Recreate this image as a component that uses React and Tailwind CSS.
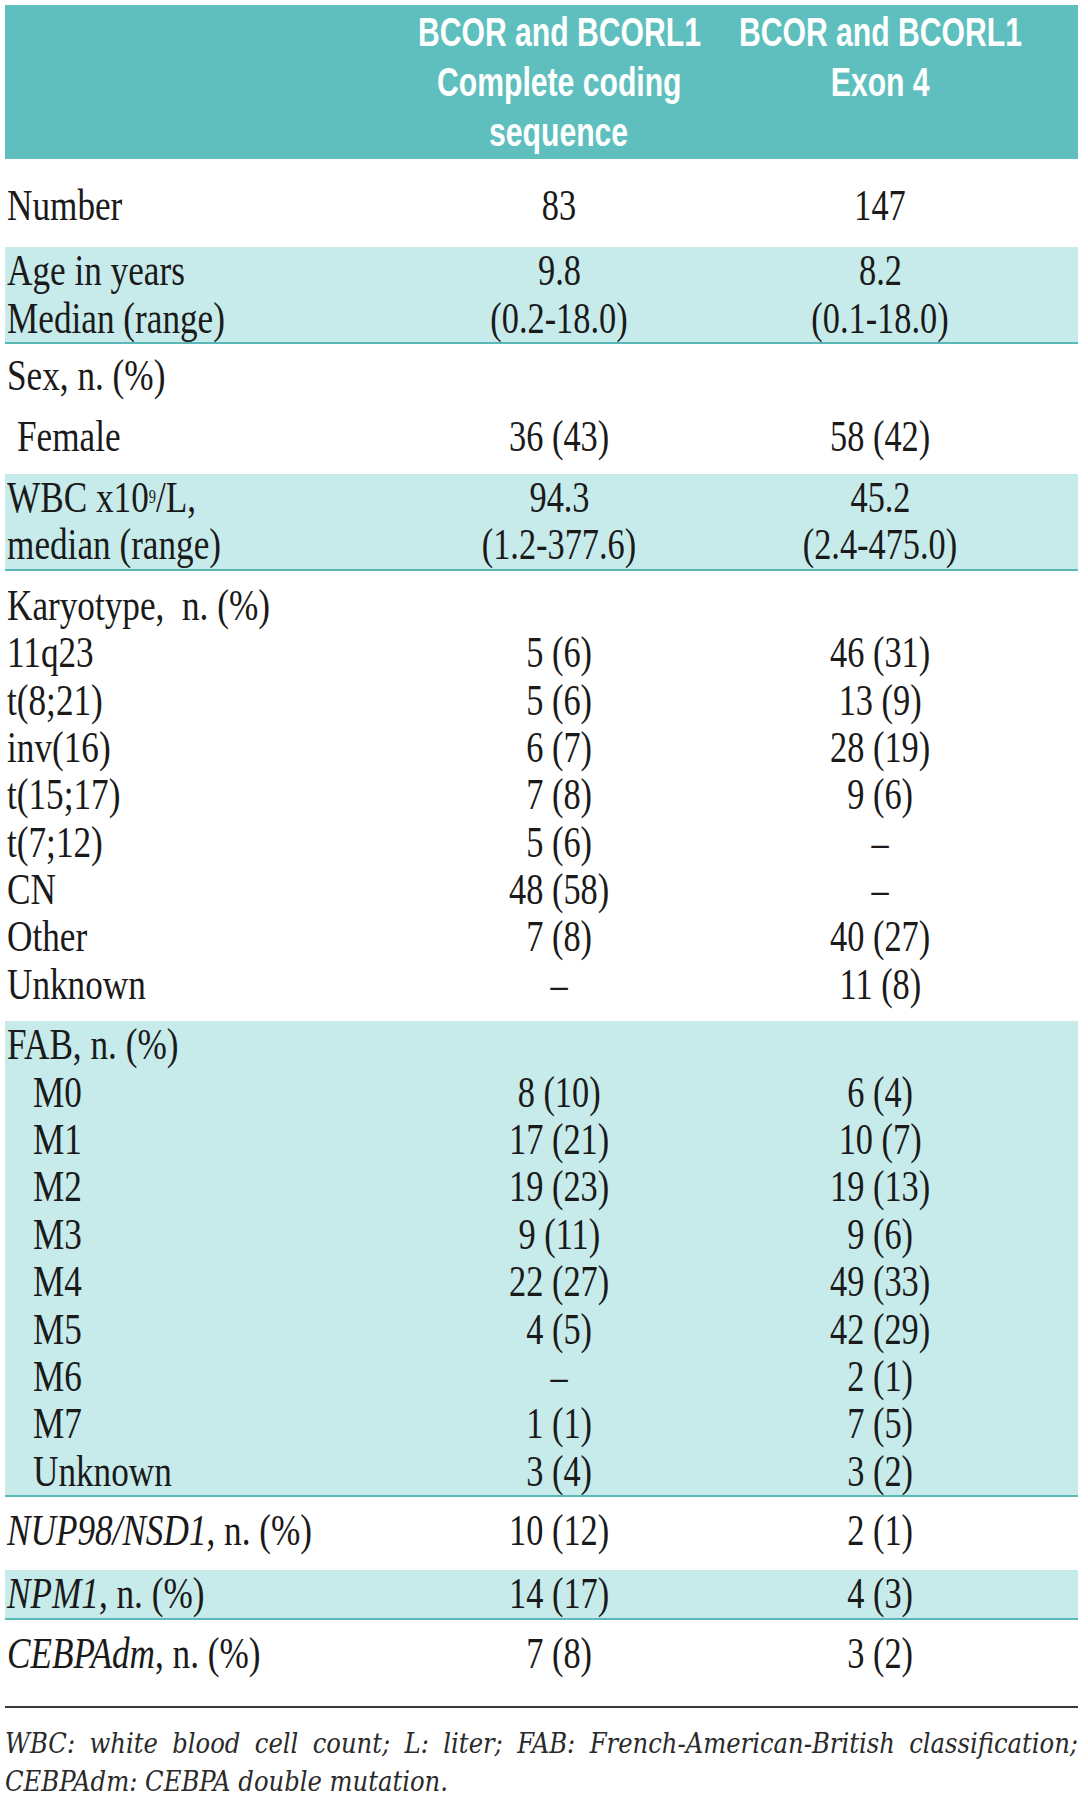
import React from 'react';

// condensed serif look: Liberation Serif squeezed horizontally
const Txt = ({ children, center }) => (
  <span
    className={`inline-block whitespace-nowrap ${center ? 'scale-x-[0.78] origin-center' : 'scale-x-[0.8] origin-left'}`}
  >
    {children}
  </span>
);

const Line = ({ label, a, b, indent = 0 }) => (
  <div className="grid grid-cols-[414px_280px_362px] h-[47.4px] leading-[47.4px]">
    <div className={indent === 1 ? 'pl-[12px]' : indent === 2 ? 'pl-[28px]' : 'pl-[2px]'}>
      <Txt>{label}</Txt>
    </div>
    <div className="flex flex-col items-center">
      <Txt center>{a}</Txt>
    </div>
    <div className="flex flex-col items-center">
      <Txt center>{b}</Txt>
    </div>
  </div>
);

const Block = ({ shaded, className = '', children }) => (
  <div className={`${shaded ? 'bg-[#c7ebea] border-b-2 border-[#5cb8b7]' : ''} ${className}`}>{children}</div>
);

const HeadLine = ({ children }) => (
  <span className="inline-block whitespace-nowrap scale-x-[0.735] origin-center">{children}</span>
);

const karyotype = [
  ['11q23', '5 (6)', '46 (31)'],
  ['t(8;21)', '5 (6)', '13 (9)'],
  ['inv(16)', '6 (7)', '28 (19)'],
  ['t(15;17)', '7 (8)', '9 (6)'],
  ['t(7;12)', '5 (6)', '–'],
  ['CN', '48 (58)', '–'],
  ['Other', '7 (8)', '40 (27)'],
  ['Unknown', '–', '11 (8)'],
];

const fab = [
  ['M0', '8 (10)', '6 (4)'],
  ['M1', '17 (21)', '10 (7)'],
  ['M2', '19 (23)', '19 (13)'],
  ['M3', '9 (11)', '9 (6)'],
  ['M4', '22 (27)', '49 (33)'],
  ['M5', '4 (5)', '42 (29)'],
  ['M6', '–', '2 (1)'],
  ['M7', '1 (1)', '7 (5)'],
  ['Unknown', '3 (4)', '3 (2)'],
];

export default function App() {
  return (
    <div className="w-[1088px] min-h-[1800px] bg-white pl-[5px] pt-[5px]">
      <div className="w-[1073px] text-[44px] text-[#1a1a1a] font-['Liberation_Serif','Times_New_Roman',serif]">
        {/* header band */}
        <div className="grid grid-cols-[414px_280px_362px] bg-[#5ebfbe] py-[2px] leading-[50px] text-[41px] font-bold text-white font-['Liberation_Sans',Arial,sans-serif]">
          <div />
          <div className="flex flex-col items-center">
            <HeadLine>BCOR and BCORL1</HeadLine>
            <HeadLine>Complete coding</HeadLine>
            <HeadLine>sequence</HeadLine>
          </div>
          <div className="flex flex-col items-center">
            <HeadLine>BCOR and BCORL1</HeadLine>
            <HeadLine>Exon 4</HeadLine>
          </div>
        </div>

        <Block className="pt-[23px] pb-[18px]">
          <Line label="Number" a="83" b="147" />
        </Block>

        <Block shaded>
          <Line label="Age in years" a="9.8" b="8.2" />
          <Line label="Median (range)" a="(0.2-18.0)" b="(0.1-18.0)" />
        </Block>

        <Block className="pt-[8px] pb-[14px]">
          <Line label="Sex, n. (%)" a="" b="" />
          <div className="h-[13px]" />
          <Line label="Female" a="36 (43)" b="58 (42)" indent={1} />
        </Block>

        <Block shaded>
          <Line label={<>WBC x10<sup className="text-[18px]">9</sup>/L,</>} a="94.3" b="45.2" />
          <Line label="median (range)" a="(1.2-377.6)" b="(2.4-475.0)" />
        </Block>

        <Block className="pt-[11px] pb-[13px]">
          <Line label={<>Karyotype,&nbsp; n. (%)</>} a="" b="" />
          {karyotype.map(([l, a, b]) => (
            <Line key={l} label={l} a={a} b={b} />
          ))}
        </Block>

        <Block shaded>
          <Line label="FAB, n. (%)" a="" b="" />
          {fab.map(([l, a, b]) => (
            <Line key={l} label={l} a={a} b={b} indent={2} />
          ))}
        </Block>

        <Block className="pt-[10px] pb-[15px]">
          <Line label={<><i>NUP98/NSD1</i>, n. (%)</>} a="10 (12)" b="2 (1)" />
        </Block>

        <Block shaded className="pb-[1px]">
          <Line label={<><i>NPM1</i>, n. (%)</>} a="14 (17)" b="4 (3)" />
        </Block>

        <Block className="pt-[10px] pb-[29px]">
          <Line label={<><i>CEBPAdm</i>, n. (%)</>} a="7 (8)" b="3 (2)" />
        </Block>

        <div className="h-[2px] bg-[#3a3a3a]" />

        {/* footnote */}
        <div className="mt-[17px] italic text-[27px] leading-[38px] text-[#2a2a2a] font-['DejaVu_Serif_Condensed','DejaVu_Serif',serif]">
          <p className="text-justify [text-align-last:justify]">
            WBC: white blood cell count; L: liter; FAB: French-American-British classification;
          </p>
          <p>CEBPAdm: CEBPA double mutation.</p>
        </div>
      </div>
    </div>
  );
}
